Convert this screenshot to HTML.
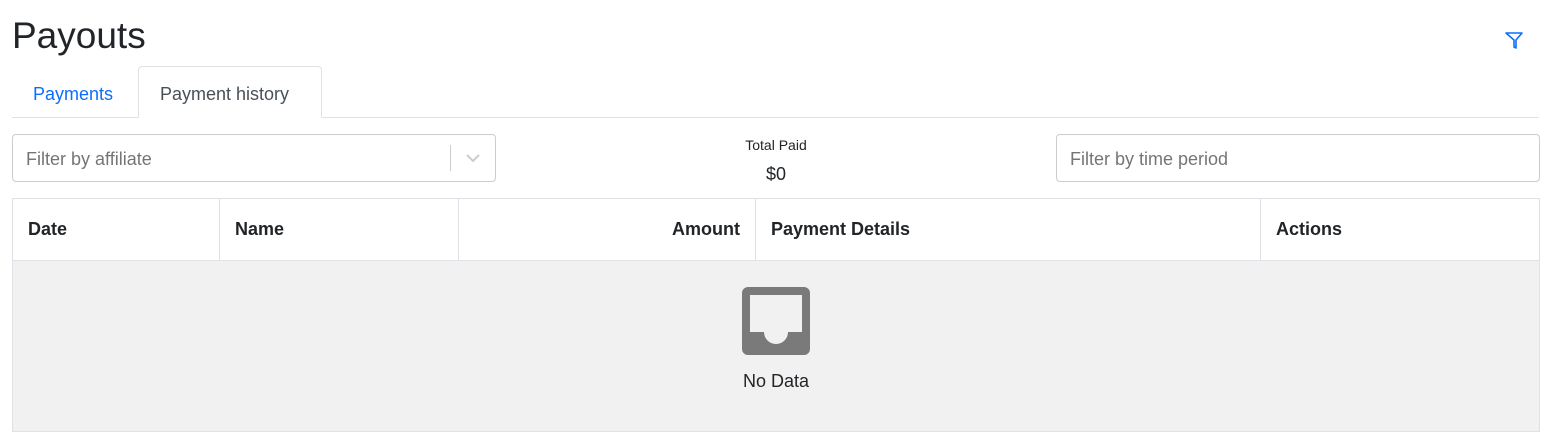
<!DOCTYPE html>
<html><head><style>
*{box-sizing:border-box;margin:0;padding:0}
body{width:1551px;height:442px;background:#fff;font-family:"Liberation Sans",sans-serif;color:#212529;position:relative;overflow:hidden}
.abs{position:absolute}
h1{position:absolute;left:12px;top:14px;font-size:37px;font-weight:400;line-height:44px;color:#212529}
.tabline{left:12px;top:117px;width:1527px;height:1px;background:#dee2e6}
.tab1{left:33px;top:84px;font-size:18px;color:#0d6efd}
.tab2{left:138px;top:66px;width:184px;height:52px;border:1px solid #dee2e6;border-bottom:1px solid #fff;border-radius:4px 4px 0 0;background:#fff;font-size:18px;color:#495057;padding-left:21px;line-height:55px}
.inp{top:134px;height:48px;border:1px solid #ccc;border-radius:4px;font-size:18px;color:#757575;padding-left:13px;line-height:48px}
table{position:absolute;left:12px;top:198px;width:1528px;border-collapse:collapse}
th{height:62px;border:1px solid #dee2e6;border-bottom:2px solid #dee2e6;text-align:left;padding-left:15px;font-size:18px;font-weight:700;color:#212529}
.body{left:12px;top:261px;width:1528px;height:171px;background:#f1f1f1;border:1px solid #dee2e6;border-top:none}
</style></head><body>
<h1>Payouts</h1>
<svg class="abs" style="left:1504px;top:31px" width="20" height="20" viewBox="0 0 20 20"><path d="M2 2h16l-6 7v8l-2-1V9z" fill="none" stroke="#0d6efd" stroke-width="1.6" stroke-linejoin="round"/></svg>
<div class="abs tabline"></div>
<div class="abs tab1">Payments</div>
<div class="abs tab2">Payment history</div>
<div class="abs inp" style="left:12px;width:484px">Filter by affiliate
<div class="abs" style="left:437px;top:10px;width:1px;height:26px;background:#ccc"></div>
<svg class="abs" style="left:452px;top:17px" width="16" height="12" viewBox="0 0 16 12"><path d="M2 3l6 6 6-6" fill="none" stroke="#ccc" stroke-width="2"/></svg>
</div>
<div class="abs" style="left:676px;top:137px;width:200px;text-align:center;font-size:14px;color:#212529">Total Paid</div>
<div class="abs" style="left:676px;top:164px;width:200px;text-align:center;font-size:18px;color:#212529">$0</div>
<div class="abs inp" style="left:1056px;width:484px">Filter by time period</div>
<table><tr>
<th style="width:207px">Date</th><th style="width:239px">Name</th><th style="width:297px;text-align:right;padding-right:15px">Amount</th><th style="width:505px">Payment Details</th><th>Actions</th>
</tr></table>
<div class="abs body"></div>
<svg class="abs" style="left:742px;top:287px" width="68" height="68" viewBox="0 0 68 68"><path fill="#7a7a7a" fill-rule="evenodd" d="M6 0h56a6 6 0 0 1 6 6v56a6 6 0 0 1-6 6H6a6 6 0 0 1-6-6V6a6 6 0 0 1 6-6zM8 8v37h14a12 12 0 0 0 24 0h14V8z"/></svg>
<div class="abs" style="left:676px;top:371px;width:200px;text-align:center;font-size:18px;color:#212529">No Data</div>
</body></html>
